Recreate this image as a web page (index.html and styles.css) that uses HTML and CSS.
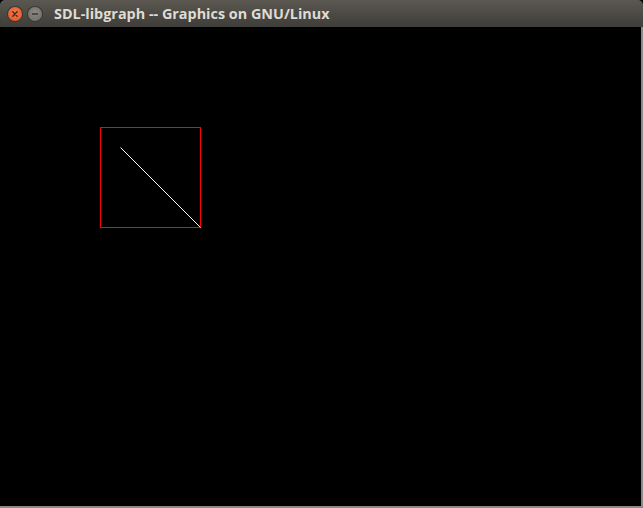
FILE: index.html
```html
<!DOCTYPE html>
<html>
<head>
<meta charset="utf-8">
<link rel="stylesheet" href="styles.css">
</head>
<body>
<div class="window">
  <div class="titlebar">
    <div class="btn close">
      <svg width="14" height="14" viewBox="0 0 14 14"><path d="M4.8 4.8 L9.2 9.2 M9.2 4.8 L4.8 9.2" stroke="#3a2a22" stroke-width="1.4" stroke-linecap="round"/></svg>
    </div>
    <div class="btn min">
      <svg width="14" height="14" viewBox="0 0 14 14"><path d="M4 7 H10" stroke="#3c3b37" stroke-width="1.6"/></svg>
    </div>
    <div class="title">SDL-libgraph -- Graphics on GNU/Linux</div>
  </div>
  <div class="content">
    <svg class="canvas" width="641" height="479" viewBox="0 0 641 479" shape-rendering="crispEdges">
      <rect x="100.5" y="100.5" width="100" height="100" fill="none" stroke="#ff0000" stroke-width="1"/>
      <line x1="120.5" y1="120.5" x2="200.5" y2="200.5" stroke="#ffffff" stroke-width="1" shape-rendering="auto"/>
    </svg>
  </div>
</div>
</body>
</html>
```
FILE: styles.css
```css
html, body {
  margin: 0;
  padding: 0;
  background: #000;
}
.window {
  width: 643px;
  height: 508px;
  display: flex;
  flex-direction: column;
  overflow: hidden;
}
.titlebar {
  height: 27px;
  flex: none;
  display: flex;
  align-items: center;
  background: linear-gradient(#5a5850, #3e3d39);
  border-radius: 5px 5px 0 0;
  padding-left: 8px;
  box-sizing: border-box;
}
.btn {
  width: 14px;
  height: 14px;
  border-radius: 50%;
  display: flex;
  margin-right: 6px;
}
.close {
  background: radial-gradient(circle at 50% 40%, #f47a4c, #e2501f);
  box-shadow: 0 0 0 1px #3a3631;
}
.min {
  background: radial-gradient(circle at 50% 40%, #8a8984, #6b6a65);
  box-shadow: 0 0 0 1px #3a3631;
}
.title {
  margin-left: 6px;
  font-family: "Open Sans", "DejaVu Sans", sans-serif;
  font-weight: 700;
  font-size: 14.4px;
  color: #dfdbd2;
  letter-spacing: 0;
}
.content {
  flex: 1;
  background: #000;
  border-right: 2px solid #8a8a8a;
  border-bottom: 2px solid #8a8a8a;
  display: flex;
}
.canvas {
  display: block;
}
```
